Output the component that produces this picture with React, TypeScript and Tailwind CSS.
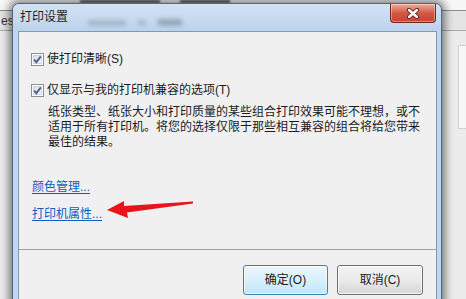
function CheckBox() {
  return (
    <svg width="13" height="13" viewBox="0 0 13 13" className="shrink-0">
      <defs>
        <linearGradient id="cbg" x1="0" y1="0" x2="1" y2="1">
          <stop offset="0" stopColor="#d9dee6" />
          <stop offset="1" stopColor="#f8f9fb" />
        </linearGradient>
      </defs>
      <rect x="0.5" y="0.5" width="12" height="12" fill="#fff" stroke="#8e8f8f" />
      <rect x="2.5" y="2.5" width="8" height="8" fill="url(#cbg)" stroke="#b8bec8" strokeWidth="0.6" />
      <path d="M3.2 6.6 L5.4 9.2 L9.8 3.4" fill="none" stroke="#4a5f97" strokeWidth="1.9" />
    </svg>
  );
}

function CloseButton() {
  return (
    <div className="ml-auto mr-[5px] shrink-0 w-[46px] h-[19px] rounded-b-[4px] border border-t-0 border-[#6e2a20] bg-gradient-to-b from-[#e9ada2] via-[#d25843] to-[#c9442f] flex items-center justify-center shadow-[inset_0_0_0_1px_rgba(255,255,255,0.35)]">
      <svg width="14" height="11" viewBox="0 0 14 11">
        <path d="M3 2 L11 9 M11 2 L3 9" stroke="#5b1f16" strokeWidth="4.2" strokeLinecap="round" />
        <path d="M3 2 L11 9 M11 2 L3 9" stroke="#fff" strokeWidth="2.4" strokeLinecap="round" />
      </svg>
    </div>
  );
}

export default function App() {
  return (
    <div className="relative w-[466px] h-[299px] overflow-hidden bg-[#ececec] font-['Liberation_Sans','Noto_Sans_CJK_SC',sans-serif] text-[12px] text-[#1b1b1b]">
      {/* application behind the dialog */}
      <div className="h-[11px] bg-[#f7f7f7] border-b border-[#8c8c8c] flex items-start gap-[20px] pl-[80px]">
        <div className="w-[80px] h-[3px] bg-[#555] blur-[1px]" />
        <div className="w-[50px] h-[3px] bg-[#555] blur-[1px]" />
      </div>
      <div className="h-[20px] bg-[#e4e4e4] border-b border-[#a8a8a8] flex items-center pl-[1px] text-[12px] leading-[14px] text-[#333]">
        es
      </div>
      <div className="absolute right-0 top-[45px] w-[8px] h-[84px] bg-[#f6f6f6] border border-r-0 border-[#d2d2d2]" />

      {/* dialog window */}
      <div className="absolute left-[12px] top-[3px] w-[430px] h-[320px] rounded-t-[7px] border border-[#55677e] bg-[#bfd7f0] shadow-[0_0_9px_3px_rgba(0,0,0,0.5)] flex flex-col">
        <div className="h-[27px] shrink-0 flex items-start rounded-t-[6px] bg-gradient-to-b from-[#d3e2f2] to-[#bcd3ec]">
          <div className="shrink-0 whitespace-nowrap pl-[7px] pt-[6px] leading-[15px] text-[12px] text-[#1e1e1e]">打印设置</div>
          <div className="flex items-center gap-[12px] ml-[20px] mt-[15px] blur-[2px] opacity-50">
            <div className="w-[38px] h-[6px] bg-[#8a97a6]" />
            <div className="w-[8px] h-[5px] bg-[#8a97a6]" />
            <div className="w-[24px] h-[7px] bg-[#6d7886]" />
          </div>
          <CloseButton />
        </div>

        <div className="flex-1 ml-[5px] mr-[4px] border border-[#8099b6] bg-[#f0f0f0] flex flex-col">
          <div className="pl-[12px] pt-[20px] flex flex-col">
            <label className="h-[15px] flex items-center gap-[3px] leading-[15px]">
              <CheckBox />
              <span>使打印清晰(S)</span>
            </label>
            <label className="mt-[16px] h-[15px] flex items-center gap-[3px] leading-[15px]">
              <CheckBox />
              <span>仅显示与我的打印机兼容的选项(T)</span>
            </label>
            <p className="mt-[7px] pl-[17px] leading-[15px]">
              <span className="block whitespace-nowrap">纸张类型、纸张大小和打印质量的某些组合打印效果可能不理想，或不</span>
              <span className="block whitespace-nowrap">适用于所有打印机。将您的选择仅限于那些相互兼容的组合将给您带来</span>
              <span className="block whitespace-nowrap">最佳的结果。</span>
            </p>
            <a className="mt-[30px] pl-[1px] self-start leading-[15px] text-[#0b5fc4] underline underline-offset-2">颜色管理...</a>
            <a className="mt-[12px] pl-[1px] self-start leading-[15px] text-[#0b5fc4] underline underline-offset-2">打印机属性...</a>
          </div>
          <div className="mt-[27px] h-px bg-[#a0a0a0]" />
          <div className="flex justify-end gap-[9px] pr-[13px] pt-[15px]">
            <button className="w-[85px] h-[30px] rounded-[3px] border border-[#3c7fb1] bg-gradient-to-b from-[#eaf6fd] via-[#d9f0fc] to-[#bee6fd] text-[12px] text-[#1b1b1b] shadow-[inset_0_0_0_1px_rgba(255,255,255,0.7)]">
              确定(O)
            </button>
            <button className="w-[86px] h-[30px] rounded-[3px] border border-[#707070] bg-gradient-to-b from-[#f2f2f2] via-[#ebebeb] to-[#d6d6d6] text-[12px] text-[#1b1b1b] shadow-[inset_0_0_0_1px_rgba(255,255,255,0.7)]">
              取消(C)
            </button>
          </div>
        </div>
      </div>

      {/* red annotation arrow */}
      <svg className="absolute left-0 top-0 pointer-events-none" width="466" height="299" viewBox="0 0 466 299">
        <polygon
          points="107,210 124,201 124,206 193,201.5 193,203.5 127,212.5 128,218"
          fill="#e8141a"
        />
      </svg>
    </div>
  );
}
